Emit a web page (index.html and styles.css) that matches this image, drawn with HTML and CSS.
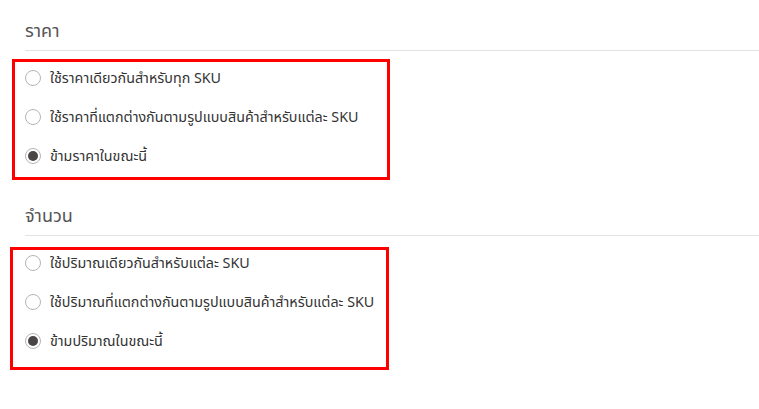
FILE: index.html
```html
<!DOCTYPE html>
<html lang="th">
<head>
<meta charset="utf-8">
<link rel="stylesheet" href="styles.css">
</head>
<body>
<div class="page">
  <section class="section">
    <h2 class="section-title">ราคา</h2>
    <div class="options">
      <span class="mark mark-price"></span>
      <label class="option"><span class="radio"></span><span class="label">ใช้ราคาเดียวกันสำหรับทุก SKU</span></label>
      <label class="option"><span class="radio"></span><span class="label">ใช้ราคาที่แตกต่างกันตามรูปแบบสินค้าสำหรับแต่ละ SKU</span></label>
      <label class="option"><span class="radio checked"></span><span class="label">ข้ามราคาในขณะนี้</span></label>
    </div>
  </section>
  <section class="section">
    <h2 class="section-title">จำนวน</h2>
    <div class="options">
      <span class="mark mark-qty"></span>
      <label class="option"><span class="radio"></span><span class="label">ใช้ปริมาณเดียวกันสำหรับแต่ละ SKU</span></label>
      <label class="option"><span class="radio"></span><span class="label">ใช้ปริมาณที่แตกต่างกันตามรูปแบบสินค้าสำหรับแต่ละ SKU</span></label>
      <label class="option"><span class="radio checked"></span><span class="label">ข้ามปริมาณในขณะนี้</span></label>
    </div>
  </section>
</div>
</body>
</html>
```
FILE: styles.css
```css
* { box-sizing: border-box; }
html, body { margin: 0; background: #fff; }
body {
  font-family: "Noto Sans Thai", "Noto Sans", "DejaVu Sans", sans-serif;
  color: #333;
}
.page {
  padding: 14px 0 0 25px;
  width: 759px;
}
.section { margin-bottom: 15px; }
.section-title {
  margin: 0;
  font-size: 18px;
  font-weight: 400;
  color: #555;
  line-height: 36px;
  border-bottom: 1px solid #e3e3e3;
}
.options {
  position: relative;
  display: flex;
  flex-direction: column;
  gap: 7px;
  padding: 11px 0 12px;
}
.mark {
  position: absolute;
  border: 3px solid #f00;
  pointer-events: none;
}
.mark-price { left: -13px; top: 8px; width: 378px; height: 121px; }
.mark-qty { left: -15px; top: 11px; width: 379px; height: 123px; }
.option {
  display: flex;
  align-items: center;
  height: 32px;
}
.radio {
  width: 16px;
  height: 16px;
  border: 1px solid #b5b5b5;
  border-radius: 50%;
  margin-right: 9px;
  display: flex;
  align-items: center;
  justify-content: center;
  flex: none;
}
.radio.checked::after {
  content: "";
  width: 10px;
  height: 10px;
  border-radius: 50%;
  background: #4a4646;
}
.label {
  font-size: 14.3px;
  color: #333;
}
```
